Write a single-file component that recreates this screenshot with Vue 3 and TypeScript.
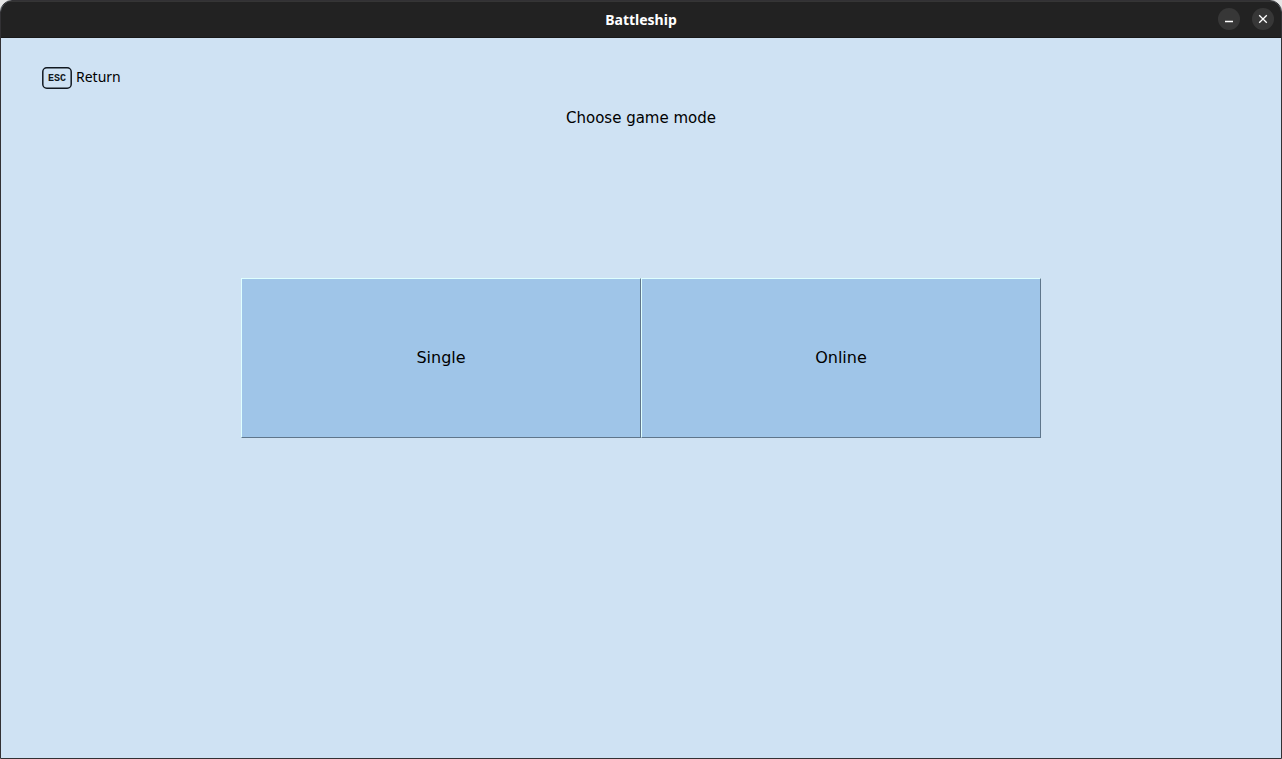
<script setup lang="ts">
interface GameMode {
  id: string
  label: string
}

const modes: GameMode[] = [
  { id: 'single', label: 'Single' },
  { id: 'online', label: 'Online' },
]
</script>

<template>
  <div class="window">
    <header class="titlebar">
      <h1 class="title">Battleship</h1>
      <div class="controls">
        <button class="control" type="button" aria-label="Minimize">
          <svg viewBox="0 0 22 22" aria-hidden="true"><path d="M7 13.5H15" /></svg>
        </button>
        <button class="control" type="button" aria-label="Close">
          <svg viewBox="0 0 22 22" aria-hidden="true"><path d="M7.2 7.2L14.8 14.8M14.8 7.2L7.2 14.8" /></svg>
        </button>
      </div>
    </header>
    <main class="screen">
      <button class="return" type="button">
        <svg class="key" viewBox="0 0 30 22" aria-hidden="true">
          <rect x="0.8" y="0.8" width="28.4" height="20.4" rx="4" />
          <text x="15" y="14" text-anchor="middle">ESC</text>
        </svg>
        <span>Return</span>
      </button>
      <h2 class="heading">Choose game mode</h2>
      <div class="modes">
        <button v-for="mode in modes" :key="mode.id" class="mode" type="button">{{ mode.label }}</button>
      </div>
    </main>
  </div>
</template>

<style>
body {
  background: #e6e6e6;
}
</style>

<style scoped>
.window {
  box-sizing: border-box;
  min-height: 100vh;
  display: flex;
  flex-direction: column;
  overflow: hidden;
  border: 1px solid #323134;
  border-radius: 12px 12px 0 0;
  background: #cfe2f3;
  color: #000;
  font-family: "DejaVu Sans", sans-serif;
}

.titlebar {
  box-sizing: border-box;
  height: 37px;
  display: grid;
  grid-template-columns: 1fr auto 1fr;
  align-items: center;
  padding: 0 7px;
  background: #222;
  border-top: 1px solid #353535;
  border-bottom: 1px solid #191919;
}

.title {
  grid-column: 2;
  margin: 0;
  color: #fff;
  font: bold 14px/20px "Noto Sans", sans-serif;
}

.controls {
  display: flex;
  justify-content: flex-end;
  gap: 12px;
  padding-bottom: 2px;
}

.control {
  width: 22px;
  height: 22px;
  padding: 0;
  border: 0;
  border-radius: 50%;
  background: #373737;
}

.control svg {
  display: block;
  fill: none;
  stroke: #fff;
  stroke-width: 1.3;
}

.screen {
  flex: 1;
  display: flex;
  flex-direction: column;
  align-items: center;
  padding-top: 27px;
}

.return {
  align-self: flex-start;
  display: flex;
  align-items: center;
  gap: 4px;
  margin-left: 41px;
  padding: 0;
  border: 0;
  background: none;
  color: #000;
  font: 14px/22px "Noto Sans", sans-serif;
}

.key {
  width: 30px;
  height: 22px;
  margin-top: 2px;
}

.key rect {
  fill: none;
  stroke: #111820;
  stroke-width: 1.5;
}

.key text {
  fill: #111820;
  font: bold 10px "Liberation Mono", monospace;
}

.heading {
  margin: 17px 0 0;
  font-size: 15px;
  font-weight: normal;
  line-height: 24px;
}

.modes {
  display: flex;
  width: 62.5%;
  margin-top: 148px;
}

.mode {
  flex: 1;
  height: 160px;
  padding: 0;
  border: 1px solid;
  border-color: #dfffff #5f768b #5f768b #dfffff;
  background: #9fc5e8;
  color: #000;
  font: 16px/20px "DejaVu Sans", sans-serif;
}
</style>
